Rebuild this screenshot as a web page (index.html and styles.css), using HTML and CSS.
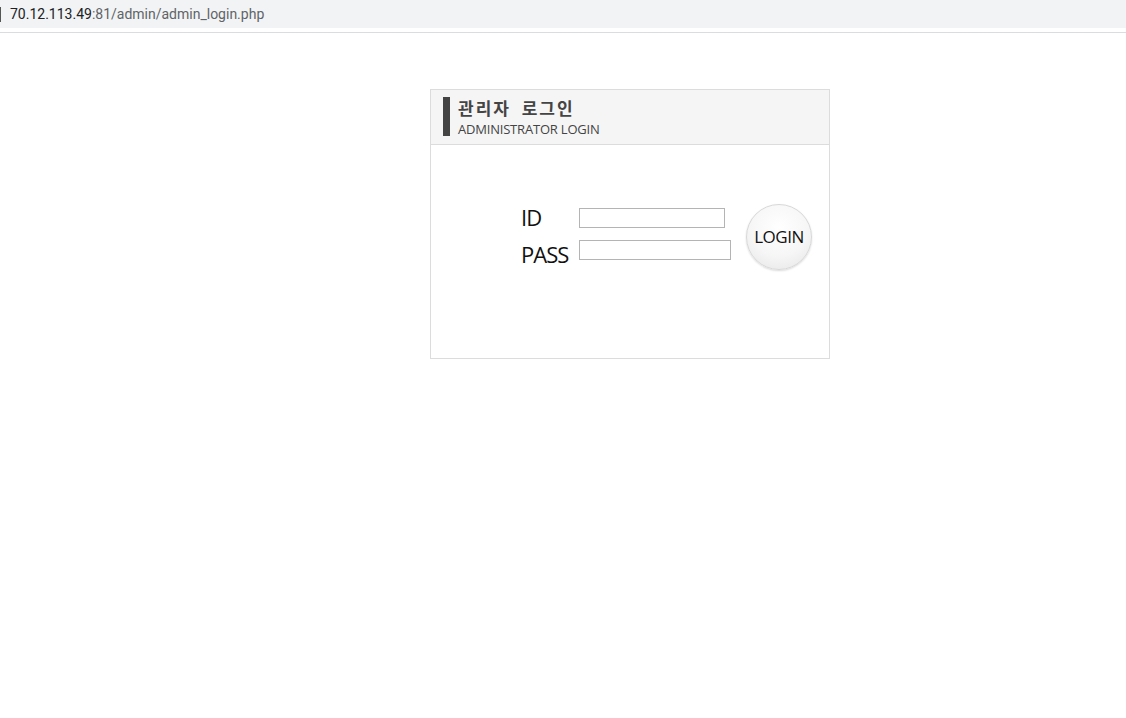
FILE: index.html
```html
<!DOCTYPE html>
<html lang="ko">
<head>
<meta charset="utf-8">
<title>admin login</title>
<link rel="stylesheet" href="styles.css">
</head>
<body>
<div class="addr">
  <span class="caret"></span>
  <span class="host">70.12.113.49</span><span class="path">:81/admin/admin_login.php</span>
</div>
<div class="addr-line"></div>
<div class="box">
  <div class="box-head">
    <div class="bar"></div>
    <div class="titles">
      <div class="title">관리자 로그인</div>
      <div class="sub">ADMINISTRATOR LOGIN</div>
    </div>
  </div>
  <div class="box-body">
    <div class="labels">
      <div class="lbl">ID</div>
      <div class="lbl">PASS</div>
    </div>
    <div class="fields">
      <input class="inp inp-id" type="text">
      <input class="inp inp-pass" type="password">
    </div>
    <button class="login">LOGIN</button>
  </div>
</div>
</body>
</html>
```
FILE: styles.css
```css
html, body { margin: 0; padding: 0; background: #fff; }
body { font-family: "Open Sans", "Noto Sans CJK KR", sans-serif; }
.addr {
  height: 28px;
  background: #f1f3f4;
  display: flex;
  align-items: center;
  font-family: Roboto, "Liberation Sans", sans-serif;
  font-size: 14px;
}
.caret { width: 1px; height: 15px; background: #555; margin-right: 9px; }
.host { color: #202124; }
.path { color: #5f6368; }
.addr-line { height: 1px; background: #dadce0; margin-top: 4px; }
.box {
  margin: 56px 0 0 430px;
  width: 398px;
  height: 268px;
  border: 1px solid #dcdcdc;
}
.box-head {
  background: #f5f5f5;
  border-bottom: 1px solid #dcdcdc;
  display: flex;
  align-items: flex-start;
  padding: 7px 0 0 12px;
  box-sizing: border-box;
  height: 55px;
}
.bar { width: 7px; height: 39px; background: #444; margin-right: 8px; }
.titles { display: flex; flex-direction: column; }
.title {
  font-family: "Noto Sans CJK KR", sans-serif;
  font-weight: bold;
  font-size: 17px;
  letter-spacing: 2px;
  word-spacing: 4px;
  color: #444;
  line-height: 22px;
}
.sub { font-size: 13px; color: #444; line-height: 16px; margin-top: 2px; letter-spacing: -0.2px; }
.box-body { display: flex; padding: 59px 0 0 90px; }
.labels { display: flex; flex-direction: column; width: 58px; }
.lbl { font-size: 22px; color: #111; line-height: 37px; letter-spacing: -1px; }
.lbl:first-child { margin-top: -5px; }
.fields { display: flex; flex-direction: column; gap: 12px; padding-top: 4px; }
.inp {
  box-sizing: border-box;
  height: 20px;
  border: 1px solid #b4b4b4;
  padding: 0;
  margin: 0;
  background: #fff;
}
.inp-id { width: 146px; }
.inp-pass { width: 152px; }
.login {
  margin-left: 15px;
  width: 66px;
  height: 66px;
  border-radius: 50%;
  border: 1px solid #d8d8d8;
  background: radial-gradient(circle at 50% 35%, #ffffff 0%, #f6f6f6 55%, #e4e4e4 100%);
  box-shadow: 0 1px 2px rgba(0,0,0,0.15);
  font-family: "Open Sans", sans-serif;
  font-size: 17px;
  color: #111;
  padding: 0 0 2px 0;
  letter-spacing: -0.5px;
}
```
